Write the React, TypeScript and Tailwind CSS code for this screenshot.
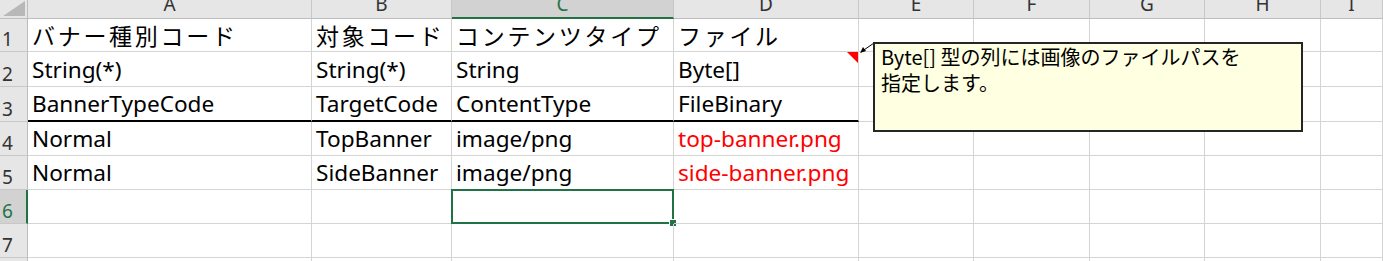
const cols = [
  { key: '', w: 28 },
  { key: 'A', w: 284 },
  { key: 'B', w: 140 },
  { key: 'C', w: 222 },
  { key: 'D', w: 185 },
  { key: 'E', w: 115 },
  { key: 'F', w: 116 },
  { key: 'G', w: 115 },
  { key: 'H', w: 116 },
  { key: 'I', w: 62 },
]

type Cell = { text: string; red?: boolean; jp?: boolean }

const rows: Cell[][] = [
  [
    { text: 'バナー種別コード', jp: true },
    { text: '対象コード', jp: true },
    { text: 'コンテンツタイプ', jp: true },
    { text: 'ファイル', jp: true },
  ],
  [{ text: 'String(*)' }, { text: 'String(*)' }, { text: 'String' }, { text: 'Byte[]' }],
  [{ text: 'BannerTypeCode' }, { text: 'TargetCode' }, { text: 'ContentType' }, { text: 'FileBinary' }],
  [{ text: 'Normal' }, { text: 'TopBanner' }, { text: 'image/png' }, { text: 'top-banner.png', red: true }],
  [{ text: 'Normal' }, { text: 'SideBanner' }, { text: 'image/png' }, { text: 'side-banner.png', red: true }],
  [],
  [],
  [],
]

const latin = "font-['Noto_Sans','Noto_Sans_CJK_JP',sans-serif]"

function ColumnHeader({ label, active }: { label: string; active: boolean }) {
  if (label === '') {
    return (
      <div className="relative border-r border-b border-[#bdbdbd] bg-[#e6e6e6]">
        <svg className="absolute right-[2px] bottom-[2px]" width="22" height="15" viewBox="0 0 22 15">
          <polygon points="22,0 22,15 0,15" fill="#b8b8b8" />
        </svg>
      </div>
    )
  }
  return (
    <div
      className={`flex justify-center overflow-hidden border-r border-[#c8c8c8] ${latin} text-[19px] leading-none ${
        active
          ? 'bg-[#d2d2d2] text-[#217346] border-b-2 border-b-[#217346]'
          : 'bg-[#e6e6e6] text-[#333] border-b border-b-[#bdbdbd]'
      }`}
    >
      <span className="mt-[-5px]">{label}</span>
    </div>
  )
}

function RowHeader({ n, active }: { n: number; active: boolean }) {
  return (
    <div
      className={`flex items-end pl-[2px] pb-[2px] border-b border-[#c8c8c8] ${latin} text-[19px] leading-none ${
        active
          ? 'bg-[#d2d2d2] text-[#217346] border-r-2 border-r-[#217346]'
          : 'bg-[#e6e6e6] text-[#333] border-r border-r-[#bdbdbd]'
      }`}
    >
      {n}
    </div>
  )
}

export default function App() {
  const rowHeights = '19px 33px 35px 35px 34px 34px 34px 34px 34px'
  return (
    <div className="relative w-[1383px] h-[261px] overflow-hidden bg-white">
      <div
        className="grid"
        style={{
          gridTemplateColumns: cols.map((c) => `${c.w}px`).join(' '),
          gridTemplateRows: rowHeights,
        }}
      >
        {cols.map((c) => (
          <ColumnHeader key={c.key || 'corner'} label={c.key} active={c.key === 'C'} />
        ))}

        {rows.map((row, ri) => (
          <div key={ri} className="contents">
            <RowHeader n={ri + 1} active={ri === 5} />
            {cols.slice(1).map((c, ci) => {
              const cell = row[ci]
              const thick = ri === 2 && ci < 4
              return (
                <div
                  key={c.key}
                  className={`relative flex items-end pl-[4px] whitespace-nowrap border-r border-[#d4d4d4] ${
                    thick ? 'border-b-2 border-b-black' : 'border-b border-b-[#d4d4d4]'
                  } ${
                    cell?.jp
                      ? "pb-[4px] font-['Noto_Sans_CJK_JP',sans-serif] text-[23px] tracking-[2.7px] leading-none"
                      : `pb-[4px] ${latin} text-[22.6px] leading-none`
                  } ${cell?.red ? 'text-[#ff0000]' : 'text-black'}`}
                >
                  {cell?.text}
                  {ri === 1 && ci === 3 && (
                    <svg className="absolute right-0 top-0" width="11" height="11" viewBox="0 0 11 11">
                      <polygon points="0,0 11,0 11,11" fill="#ff0000" />
                    </svg>
                  )}
                  {ri === 5 && ci === 2 && (
                    <div className="absolute inset-x-[-1px] top-[-1px] bottom-[-1px] border-2 border-[#217346]">
                      <div className="absolute right-[-5px] bottom-[-5px] w-[8px] h-[8px] bg-[#217346] border border-white" />
                    </div>
                  )}
                </div>
              )
            })}
          </div>
        ))}
      </div>

      {/* comment connector */}
      <svg className="absolute left-[856px] top-[40px]" width="22" height="18" viewBox="0 0 22 18">
        <line x1="5" y1="12" x2="18" y2="3" stroke="#000" strokeWidth="1" />
        <polygon points="4,13 10,11 7,7" fill="#000" />
      </svg>

      {/* comment box */}
      <div className="absolute left-[873px] top-[42px] w-[430px] h-[90px] bg-[#ffffe1] border-2 border-[#262626] pl-[6px] font-['Noto_Sans_CJK_JP',sans-serif] text-[20px] leading-[26px] text-black">
        <div>Byte[] 型の列には画像のファイルパスを</div>
        <div>指定します。</div>
      </div>
    </div>
  )
}
